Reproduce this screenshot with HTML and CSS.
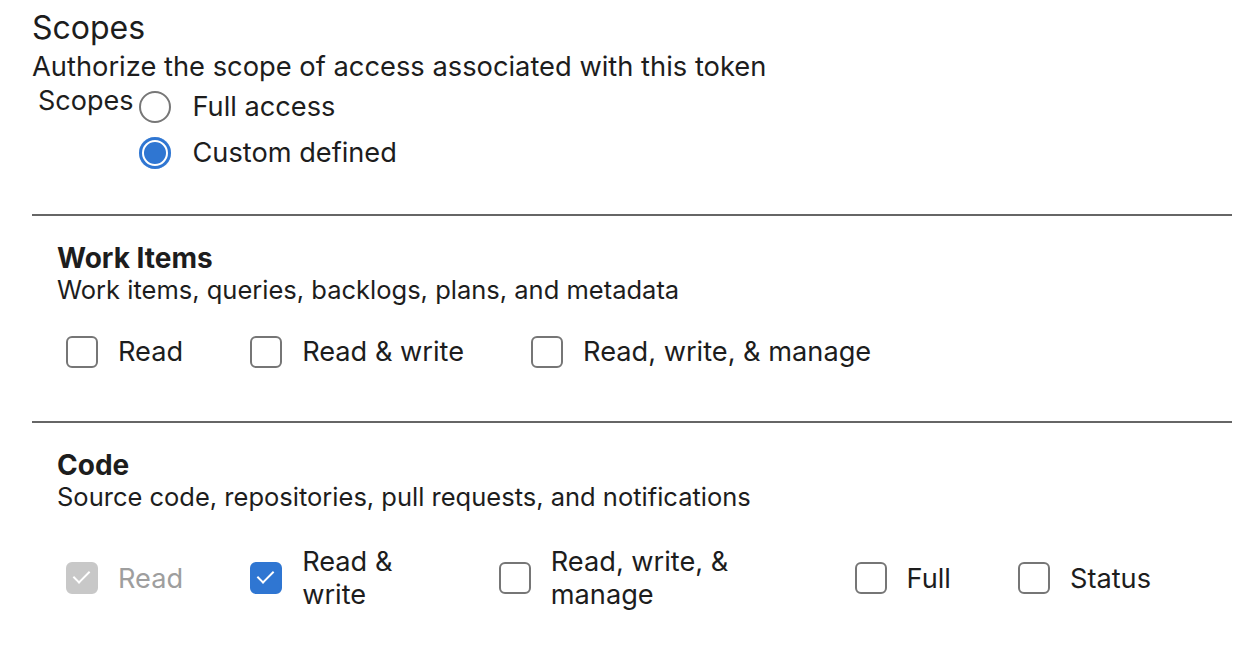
FILE: index.html
```html
<!DOCTYPE html>
<html lang="en">
<head>
  <meta charset="UTF-8">
  <title>Token Scopes</title>
  <link rel="stylesheet" href="styles.css">
</head>
<body>

  <div class="page">
    <h2 class="title">Scopes</h2>
    <p class="subtitle">Authorize the scope of access associated with this token</p>

    <div class="scope-choice">
      <span class="scope-label">Scopes</span>
      <div class="radios">
        <label class="radio-row">
          <input type="radio" name="scope" value="full">
          <span>Full access</span>
        </label>
        <label class="radio-row">
          <input type="radio" name="scope" value="custom" checked>
          <span>Custom defined</span>
        </label>
      </div>
    </div>

    <!-- Work items scope -->
    <section class="scope-section">
      <h3>Work Items</h3>
      <p class="desc">Work items, queries, backlogs, plans, and metadata</p>
      <div class="options">
        <label class="option"><input type="checkbox"><span>Read</span></label>
        <label class="option"><input type="checkbox"><span>Read &amp; write</span></label>
        <label class="option"><input type="checkbox"><span>Read, write, &amp; manage</span></label>
      </div>
    </section>

    <!-- Code scope -->
    <section class="scope-section">
      <h3>Code</h3>
      <p class="desc">Source code, repositories, pull requests, and notifications</p>
      <div class="options wrapped">
        <label class="option disabled"><input type="checkbox" checked disabled><span>Read</span></label>
        <label class="option"><input type="checkbox" checked><span>Read &amp; write</span></label>
        <label class="option"><input type="checkbox"><span>Read, write, &amp; manage</span></label>
        <label class="option"><input type="checkbox"><span>Full</span></label>
        <label class="option"><input type="checkbox"><span>Status</span></label>
      </div>
    </section>
  </div>

</body>
</html>
```

FILE: styles.css
```css
body {
  margin: 0;
  font-family: Inter, "Noto Sans", sans-serif;
  color: #1d1d1d;
  background: #fff;
}

.page {
  margin: 0 24px 0 32px;
  padding-top: 10px;
}

.title {
  margin: 0;
  font-size: 32px;
  line-height: 36px;
  font-weight: 400;
}

.subtitle {
  margin: 5px 0 0;
  font-size: 27.3px;
  line-height: 32px;
}

.scope-choice {
  display: flex;
  align-items: flex-start;
  margin-top: 8px;
  margin-bottom: 45px;
}

.scope-label {
  margin: -5px 6px 0 6px;
  font-size: 27px;
  line-height: 30px;
}

.radios {
  display: flex;
  flex-direction: column;
  gap: 14px;
}

.radio-row {
  display: flex;
  align-items: center;
  gap: 21px;
  font-size: 27.2px;
  line-height: 32px;
}

input[type="radio"] {
  appearance: none;
  margin: 0;
  width: 32px;
  height: 32px;
  border: 2px solid #777;
  border-radius: 50%;
  background: #fff;
}

input[type="radio"]:checked {
  border: none;
  background: #2f76d2;
  box-shadow: inset 0 0 0 3px #2f76d2, inset 0 0 0 5px #fff;
}

.scope-section {
  border-top: 2px solid #666;
  padding: 27px 81px 53px 25px;
}

.scope-section h3 {
  margin: 0;
  font-size: 28px;
  line-height: 31px;
  font-weight: 700;
}

.desc {
  margin: 0;
  font-size: 25.5px;
  line-height: 32px;
}

.options {
  display: flex;
  gap: 67px;
  margin-top: 29px;
  padding-left: 9px;
}

.options.wrapped {
  margin-top: 32px;
}

.option {
  display: flex;
  align-items: center;
  gap: 20px;
  font-size: 27.2px;
  line-height: 33px;
}

input[type="checkbox"] {
  appearance: none;
  flex: none;
  position: relative;
  margin: 0;
  width: 32px;
  height: 32px;
  border: 2px solid #767676;
  border-radius: 6px;
  background: #fff;
}

input[type="checkbox"]:checked {
  border-color: #2f76d2;
  background: #2f76d2;
}

input[type="checkbox"]:checked::before {
  content: "";
  position: absolute;
  left: 9px;
  top: 3px;
  width: 7px;
  height: 14px;
  border-right: 2px solid #fff;
  border-bottom: 2px solid #fff;
  transform: rotate(45deg);
}

input[type="checkbox"]:disabled {
  border-color: #c8c8c8;
  background: #c8c8c8;
}

.option.disabled {
  color: #9e9e9e;
}
```
